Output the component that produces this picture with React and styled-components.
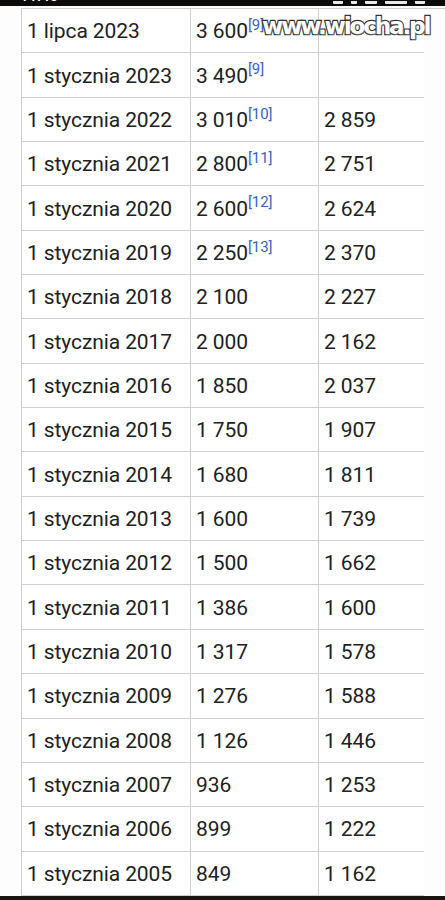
import React from 'react'
import styled, {createGlobalStyle} from 'styled-components'

const rows = [
    ['1 lipca 2023', '3 600', '9', ''],
    ['1 stycznia 2023', '3 490', '9', ''],
    ['1 stycznia 2022', '3 010', '10', '2 859'],
    ['1 stycznia 2021', '2 800', '11', '2 751'],
    ['1 stycznia 2020', '2 600', '12', '2 624'],
    ['1 stycznia 2019', '2 250', '13', '2 370'],
    ['1 stycznia 2018', '2 100', '', '2 227'],
    ['1 stycznia 2017', '2 000', '', '2 162'],
    ['1 stycznia 2016', '1 850', '', '2 037'],
    ['1 stycznia 2015', '1 750', '', '1 907'],
    ['1 stycznia 2014', '1 680', '', '1 811'],
    ['1 stycznia 2013', '1 600', '', '1 739'],
    ['1 stycznia 2012', '1 500', '', '1 662'],
    ['1 stycznia 2011', '1 386', '', '1 600'],
    ['1 stycznia 2010', '1 317', '', '1 578'],
    ['1 stycznia 2009', '1 276', '', '1 588'],
    ['1 stycznia 2008', '1 126', '', '1 446'],
    ['1 stycznia 2007', '936', '', '1 253'],
    ['1 stycznia 2006', '899', '', '1 222'],
    ['1 stycznia 2005', '849', '', '1 162'],
]

export default function App() {
    return (
        <Page>
            <GlobalStyle />
            <StatusBar>
                <Clock>11:40</Clock>
                <StatusIcons>
                    <Icon w={10} />
                    <Icon w={6} />
                    <Icon w={12} />
                    <Icon w={22} />
                    <Icon w={10} />
                </StatusIcons>
            </StatusBar>

            <Content>
                <Table>
                    {rows.map(([date, value, ref, other]) => (
                        <Row key={date}>
                            <Cell>{date}</Cell>
                            <Cell>
                                {value}
                                {ref && <Ref>[{ref}]</Ref>}
                            </Cell>
                            <Cell>{other}</Cell>
                        </Row>
                    ))}
                </Table>
                <Watermark>www.wiocha.pl</Watermark>
            </Content>

            <NavBar />
        </Page>
    )
}

const GlobalStyle = createGlobalStyle`
    html, body {
        margin: 0;
        padding: 0;
        background: #fff;
    }
    body {
        font-family: Roboto, "Noto Sans", sans-serif;
        color: #202122;
    }
`
const Page = styled.div`
    width: 445px;
    height: 900px;
    overflow: hidden;
    display: flex;
    flex-direction: column;
    background: #fdfdfd;
`
const StatusBar = styled.div`
    height: 6px;
    flex-shrink: 0;
    background: #0d0b0a;
    display: flex;
    justify-content: space-between;
    align-items: flex-end;
    padding: 0 20px;
    overflow: hidden;
`
const Clock = styled.div`
    color: #fff;
    font-size: 15px;
    font-weight: 500;
    line-height: 15px;
    margin-bottom: 2px;
`
const StatusIcons = styled.div`
    display: flex;
    gap: 8px;
    align-items: flex-end;
    margin-bottom: 2px;
`
const Icon = styled.span`
    width: ${props => props.w + 'px'};
    height: 3px;
    background: #e8e8e8;
    border-radius: 0 0 1px 1px;
`
const Content = styled.div`
    position: relative;
    flex: 1;
    padding: 2px 0 0 21px;
`
const Table = styled.div`
    display: grid;
    grid-template-columns: 169px 128px 106px;
    border-top: 1px solid #cfcfcf;
`
const Row = styled.div`
    display: contents;
`
const Cell = styled.div`
    height: 44.35px;
    box-sizing: border-box;
    display: flex;
    align-items: center;
    padding: 1px 0 0 5px;
    border-left: 1px solid #cfcfcf;
    border-bottom: 1px solid #cfcfcf;
    font-size: 21px;
    letter-spacing: -0.1px;
    white-space: nowrap;
    background: #fff;
`
const Ref = styled.sup`
    align-self: flex-start;
    margin-top: 8px;
    font-size: 15px;
    line-height: 15px;
    color: #3a62c4;
    vertical-align: baseline;
`
const Watermark = styled.div`
    position: absolute;
    top: 7px;
    left: 262px;
    font-family: "DejaVu Sans", sans-serif;
    font-weight: bold;
    font-size: 23px;
    letter-spacing: -2.1px;
    color: #fff;
    -webkit-text-stroke: 2.4px #333;
    paint-order: stroke fill;
    text-shadow: 1px 1px 0 #666;
`
const NavBar = styled.div`
    height: 5px;
    flex-shrink: 0;
    background: #1b1512;
`
